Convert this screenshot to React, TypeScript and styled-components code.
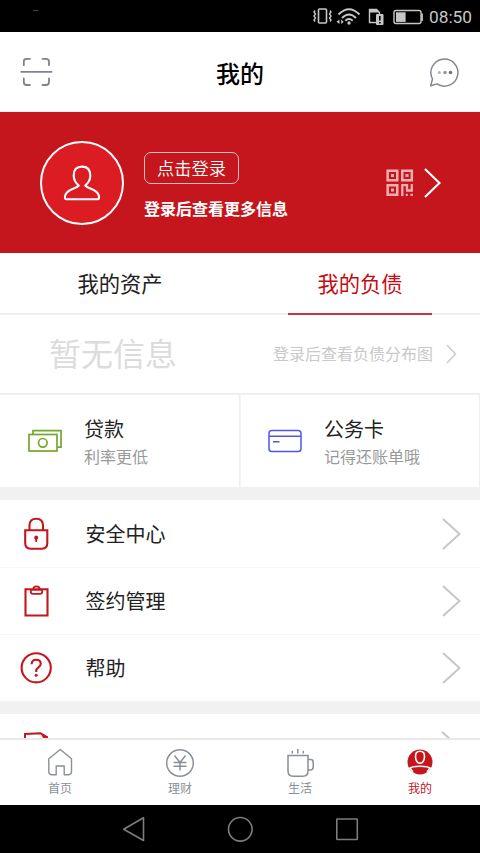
import React from "react";
import styled, { createGlobalStyle } from "styled-components";

const GlobalStyle = createGlobalStyle`
  * { box-sizing: border-box; }
  body {
    margin: 0;
    background: #000;
    font-family: "Noto Sans CJK SC", "Noto Sans", sans-serif;
    color: #222;
  }
  svg { display: block; flex: none; fill: none; }
`;

const Screen = styled.div`
  width: 480px;
  height: 853px;
  display: flex;
  flex-direction: column;
  background: #fff;
  overflow: hidden;
`;

const StatusBar = styled.header`
  height: 32px;
  flex: none;
  display: flex;
  justify-content: space-between;
  background: #000;
`;

const StatusRight = styled.div`
  display: flex;
  padding-right: 8px;
`;

const Clock = styled.span`
  width: 43px;
  font: 17.3px/34px Roboto, sans-serif;
  color: #c6c6c6;
  white-space: nowrap;
`;

const TitleBar = styled.div`
  height: 80px;
  flex: none;
  display: flex;
  align-items: center;
  justify-content: space-between;
  padding: 0 20px;
  border-bottom: 1px solid #edf4f5;
`;

const Title = styled.h1`
  margin: 2px 2px 0 0;
  font-size: 24px;
  line-height: 36px;
  font-weight: 500;
  color: #000;
`;

const Banner = styled.section`
  height: 141px;
  flex: none;
  display: flex;
  align-items: center;
  padding: 0 39px 0 40px;
  background: #c4161c;
`;

const Avatar = styled.div`
  width: 84px;
  height: 84px;
  border: 2px solid #fff;
  border-radius: 50%;
  background: #dc1c23;
  display: flex;
  align-items: center;
  justify-content: center;
`;

const LoginInfo = styled.div`
  margin: 6px auto 0 20px;
  display: flex;
  flex-direction: column;
  align-items: flex-start;
  gap: 12px;
`;

const LoginButton = styled.button`
  width: 95px;
  height: 32px;
  padding: 0;
  border: 1px solid #eebcbe;
  border-radius: 7px;
  background: transparent;
  color: #fff;
  font: 17.3px/30px "Noto Sans CJK SC", sans-serif;
  font-weight: 350;
`;

const LoginHint = styled.span`
  font-size: 16px;
  line-height: 24px;
  font-weight: 700;
  color: #fff;
`;

const BannerActions = styled.div`
  display: flex;
  align-items: center;
  gap: 10px;
  margin-top: 1px;
`;

const Tabs = styled.nav`
  height: 62px;
  flex: none;
  display: flex;
  border-bottom: 2px solid #efefef;
`;

const Tab = styled.div<{ $active?: boolean }>`
  flex: 1;
  display: flex;
  justify-content: center;
  height: 62px;
  span {
    width: 144px;
    height: 62px;
    text-align: center;
    font-size: 21.3px;
    line-height: 60px;
    color: ${(p) => (p.$active ? "#c40d15" : "#222")};
    border-bottom: ${(p) => (p.$active ? "2px solid #cf3138" : "0")};
  }
`;

const Summary = styled.div`
  height: 78px;
  flex: none;
  display: flex;
  align-items: center;
  padding: 0 23px 0 49px;
`;

const EmptyText = styled.span`
  font-size: 32px;
  line-height: 48px;
  color: #dcdcdc;
  margin: -5px auto 0 0;
`;

const SummaryLink = styled.span`
  font-size: 16px;
  line-height: 24px;
  color: #c9c9c9;
  margin: -2px 13px 0 0;
`;

const Cards = styled.section`
  height: 94px;
  flex: none;
  display: flex;
  border-top: 2px solid #efefef;
`;

const Card = styled.div`
  flex: 1;
  display: flex;
  align-items: center;
  padding-left: 28px;
  border-right: 1px solid #efefef;
  & + & { border-left: 1px solid #f4f4f4; padding-left: 27px; }
`;

const CardText = styled.div`
  margin: 0 0 0 22px;
  display: flex;
  flex-direction: column;
`;

const CardTitle = styled.span`
  font-size: 20px;
  line-height: 30px;
`;

const CardSubtitle = styled.span`
  font-size: 16px;
  line-height: 24px;
  color: #999;
`;

const Gap = styled.div`
  height: 13px;
  flex: none;
  background: #f1f1f1;
`;

const List = styled.main`
  flex: none;
`;

const Row = styled.div`
  height: 67px;
  display: flex;
  align-items: center;
  padding: 0 19px 0 20px;
  & + & { border-top: 1px solid #f7f7f7; }
`;

const RowLabel = styled.span`
  margin: 0 auto 0 33.5px;
  font-size: 20px;
  line-height: 30px;
`;

const ClippedRow = styled.div`
  height: 24px;
  flex: none;
  display: flex;
  align-items: flex-end;
  justify-content: space-between;
  padding: 0 29px 0 23px;
`;

const TabBar = styled.nav`
  height: 67px;
  flex: none;
  display: flex;
  border-top: 2px solid #e9e9e9;
`;

const TabItem = styled.div<{ $active?: boolean }>`
  flex: 1;
  display: flex;
  flex-direction: column;
  align-items: center;
  padding-top: 8px;
  font-size: 12px;
  line-height: 19px;
  color: ${(p) => (p.$active ? "#c4161c" : "#8b9098")};
`;

const SystemNav = styled.footer`
  flex: 1;
  display: flex;
  justify-content: center;
  background: #000;
`;

const Chevron = ({ w, h, color, stroke }: { w: number; h: number; color: string; stroke: number }) => (
  <svg width={w} height={h} viewBox={`0 0 ${w} ${h}`} stroke={color} strokeWidth={stroke}>
    <path d={`M1 1 L${w - 1.5} ${h / 2} L1 ${h - 1}`} />
  </svg>
);

const StatusIcons = () => (
  <svg width="117" height="32" viewBox="312 0 117 32" stroke="#c6c6c6">
    <rect x="318.5" y="9" width="8" height="14" rx="1" strokeWidth="1.6" />
    <path d="M315 10.5l-1 1.5 1.5 2-1.5 2 1.5 2-1.5 2 1 1.5M330 10.5l1 1.5-1.5 2 1.5 2-1.5 2 1.5 2-1 1.5" strokeWidth="1.4" />
    <path d="M338.5 14.5q10.500-10.500 21 0M342 18q7-7 14 0M345.300 20.800q3.700-3.400 7.400 0" strokeWidth="1.9" />
    <circle cx="349" cy="23" r="1.7" fill="#c6c6c6" stroke="none" />
    <path d="M339.500 19.500v4.500l-3-2.250zM341.200 19.500v4.500l2.500-2.250z" fill="#c6c6c6" stroke="none" />
    <path d="M376 22.500h-6.500v-13h7l3 3v2" strokeWidth="1.4" />
    <path d="M370 9h6.500l3 3.500h-9.500z" fill="#c6c6c6" stroke="none" />
    <rect x="376" y="14" width="7.500" height="11" rx="1" fill="#c6c6c6" stroke="none" />
    <path d="M379.800 16v4.500M379.800 22v1.500" stroke="#000" strokeWidth="1.6" />
    <rect x="394" y="10.500" width="27" height="13" rx="2" strokeWidth="1.4" />
    <path d="M422 13.500v7.500" strokeWidth="1.800" />
    <rect x="396" y="12.300" width="9.600" height="9.600" fill="#c6c6c6" stroke="none" />
  </svg>
);

const ScanIcon = () => (
  <svg width="33" height="30" viewBox="0 0 33 30" stroke="#80838d" strokeWidth="1.8" strokeLinecap="round">
    <path d="M3.800 8.200V4.600Q3.800 1.800 6.600 1.800H10M22.500 1.800H26Q29 1.800 29 4.600V8.200M3.800 21.500V25Q3.800 28 6.600 28H10M22.500 28H26Q29 28 29 25V21.500M1.200 14.800H31.500" />
  </svg>
);

const ChatIcon = () => (
  <svg width="31" height="30" viewBox="429 57 31 30" stroke="#858790" strokeWidth="1.500" strokeLinejoin="round">
    <path d="M430.700 85.700L432.500 79A13.500 13.500 0 1 1 437 83.900Z" />
    <g stroke="none"><circle cx="439.300" cy="72.500" r="1.600" fill="#b6b8be" /><circle cx="445" cy="72.500" r="1.700" fill="#92959d" /><circle cx="450.500" cy="72.500" r="1.800" fill="#6f727c" /></g>
  </svg>
);

const PersonIcon = () => (
  <svg width="38" height="38" viewBox="0 0 38 38" stroke="#fff" strokeWidth="2.100" strokeLinejoin="round">
    <path d="M15.800 21.500C12.300 18.700 10.700 15.500 10.700 11.500C10.700 5.500 13.500 2.600 19 2.600S27.300 5.500 27.300 11.500C27.300 15.500 25.700 18.700 22.200 21.500C25.500 25.500 34 24.500 35.800 31.500Q36.700 35.300 34.500 35.300H3.500Q1.300 35.300 2.200 31.500C4 24.500 12.500 25.500 15.800 21.500Z" />
  </svg>
);

const QrIcon = () => (
  <svg width="28" height="28" viewBox="0 0 28 28" stroke="#f1aeb1" strokeWidth="2.500">
    <path d="M1.650 1.650h9.600v9.600h-9.600zM16.250 1.650h9.600v9.600h-9.600zM1.650 16.250h9.600v9.600h-9.600z" />
    <path d="M5 6.500h3M19.500 6.500h3M5 21h3" strokeWidth="3" />
    <path d="M16.300 27V16.200H21V21.500M25.800 15V21.500H20M19.800 25.800h2M24.500 25.800h2.500" strokeWidth="2.300" />
  </svg>
);

const CashIcon = () => (
  <svg width="34" height="24" viewBox="0 0 34 24" stroke="#74a72c" strokeWidth="1.700">
    <rect x="1" y="5.500" width="28" height="16.500" />
    <path d="M5 5.500V1.700H33V18.200H29" />
    <circle cx="14.800" cy="13.800" r="4.300" />
  </svg>
);

const CreditCardIcon = () => (
  <svg width="34" height="24" viewBox="0 0 34 24" stroke="#5254ee" strokeWidth="1.500">
    <rect x="1" y="1.500" width="32" height="21" rx="2.800" />
    <path d="M1 7.200h32M5 12.700h6.500" />
  </svg>
);

const LockIcon = () => (
  <svg width="32" height="34" viewBox="0 0 32 34" stroke="#c4161c" strokeWidth="2.100">
    <path d="M5.200 13.200H27.300V26Q27.300 31.700 22 31.700H10.500Q5.200 31.700 5.200 26zM9.500 13.200V8.500Q9.500 1.800 16.200 1.800T23 8.500V13.200" />
    <path d="M16.200 18.500a2.200 2.200 0 0 1 1.100 4l-.4 2.600h-1.400l-.4-2.600a2.200 2.200 0 0 1 1.100-4z" fill="#c4161c" stroke="none" />
  </svg>
);

const ClipboardIcon = () => (
  <svg width="32" height="34" viewBox="0 0 32 34" stroke="#c4161c" strokeWidth="2.100">
    <path d="M5.500 5.300H27.500V31.500H5.500Z" />
    <path d="M10.800 5.800V7.500Q10.800 9.900 13.200 9.900H19.800Q22.200 9.900 22.200 7.500V5.800Z" fill="#fff" strokeWidth="1.800" />
    <path d="M13.300 5.500Q13.300 2.300 16.500 2.300T19.700 5.500" strokeWidth="1.800" />
  </svg>
);

const HelpIcon = () => (
  <svg width="32" height="34" viewBox="0 0 32 34" stroke="#c4161c" strokeWidth="2.100">
    <circle cx="16.200" cy="16.800" r="14.600" />
    <path d="M11.600 13.200Q11.800 8.700 16.200 8.700T20.800 12.600Q20.800 14.700 18.500 16.300T16.200 19.800V21" />
    <circle cx="16.200" cy="24.300" r="1.500" fill="#c4161c" stroke="none" />
  </svg>
);

const HomeIcon = () => (
  <svg width="28" height="30" viewBox="0 0 28 30" stroke="#8b9098" strokeWidth="1.400" strokeLinejoin="round">
    <path d="M14.300 1.500L25.500 10.800V23.500Q25.500 26.700 22.200 26.700H18.200V18H10.200V26.700H6Q2.800 26.700 2.800 23.500V10.800Z" />
  </svg>
);

const YuanIcon = () => (
  <svg width="30" height="30" viewBox="0 0 30 30" stroke="#8b9098" strokeWidth="1.500">
    <circle cx="15" cy="15" r="13.300" />
    <path d="M9.500 7.500L15 14.500L20.500 7.500M15 14.500V22.500M8.500 14.500H21.500M8.500 18.200H21.500" />
  </svg>
);

const CupIcon = () => (
  <svg width="30" height="30" viewBox="0 0 30 30" stroke="#8b9098" strokeWidth="1.500">
    <path d="M3 7.500H23V23Q23 28.200 18 28.200H8Q3 28.200 3 23ZM23 11.500H25.500Q28.200 11.500 28.200 14V19Q28.200 22 25.500 22H23M7.300 2.700v2.800M12.800 1v4.500M18.300 2.700v2.800" />
  </svg>
);

const ProfileIcon = () => (
  <svg width="30" height="30" viewBox="0 0 30 30" stroke="#fff" strokeWidth="1.600">
    <circle cx="15" cy="14" r="12.500" fill="#c4161c" stroke="none" />
    <path d="M15 3.200C18.500 3.200 19.700 5.500 19.500 9Q19 15.200 15 15.200T10.500 9C10.300 5.500 11.500 3.200 15 3.200Z" />
    <path d="M3.500 20.800Q7 18.300 15 18.300T26.500 20.800" />
    <path d="M5 19.800L7.800 24M25 19.800L22.200 24" />
  </svg>
);

const NavButtons = () => (
  <svg width="240" height="48" viewBox="120 805 240 48" stroke="#7c7c7c" strokeWidth="1.600" strokeLinejoin="round">
    <path d="M143.500 817.700V840.500L123.700 829.200Z" />
    <circle cx="240.300" cy="829.300" r="11.800" />
    <rect x="336.800" y="819" width="20.500" height="20.500" rx="0.500" />
  </svg>
);

const menu = [
  { label: "安全中心", Icon: LockIcon },
  { label: "签约管理", Icon: ClipboardIcon },
  { label: "帮助", Icon: HelpIcon },
];

const bottomTabs = [
  { label: "首页", Icon: HomeIcon },
  { label: "理财", Icon: YuanIcon },
  { label: "生活", Icon: CupIcon },
  { label: "我的", Icon: ProfileIcon, active: true },
];

export default function App() {
  return (
    <>
      <GlobalStyle />
      <Screen>
        <StatusBar>
          <svg width="60" height="32" stroke="#444"><path d="M33 10.500h5" /></svg>
          <StatusRight>
            <StatusIcons />
            <Clock>08:50</Clock>
          </StatusRight>
        </StatusBar>
        <TitleBar>
          <ScanIcon />
          <Title>我的</Title>
          <ChatIcon />
        </TitleBar>
        <Banner>
          <Avatar><PersonIcon /></Avatar>
          <LoginInfo>
            <LoginButton>点击登录</LoginButton>
            <LoginHint>登录后查看更多信息</LoginHint>
          </LoginInfo>
          <BannerActions>
            <QrIcon />
            <Chevron w={17} h={30} color="#fff" stroke={2.2} />
          </BannerActions>
        </Banner>
        <Tabs>
          <Tab><span>我的资产</span></Tab>
          <Tab $active><span>我的负债</span></Tab>
        </Tabs>
        <Summary>
          <EmptyText>暂无信息</EmptyText>
          <SummaryLink>登录后查看负债分布图</SummaryLink>
          <Chevron w={11} h={20} color="#c9c9c9" stroke={1.4} />
        </Summary>
        <Cards>
          <Card>
            <CashIcon />
            <CardText><CardTitle>贷款</CardTitle><CardSubtitle>利率更低</CardSubtitle></CardText>
          </Card>
          <Card>
            <CreditCardIcon />
            <CardText><CardTitle>公务卡</CardTitle><CardSubtitle>记得还账单哦</CardSubtitle></CardText>
          </Card>
        </Cards>
        <Gap />
        <List>
          {menu.map(({ label, Icon }) => (
            <Row key={label}>
              <Icon />
              <RowLabel>{label}</RowLabel>
              <Chevron w={19} h={32} color="#c7c7c7" stroke={2} />
            </Row>
          ))}
        </List>
        <Gap />
        <ClippedRow>
          <svg width="26" height="6" viewBox="0 0 26 6" stroke="#c4161c" strokeWidth="2">
            <path d="M2 6V2L17.500 1.200L24.500 5.500" />
            <path d="M17.500 1L25 4.500V6H20Z" fill="#c4161c" stroke="none" />
          </svg>
          <svg width="10" height="7" viewBox="0 0 10 7" stroke="#c7c7c7" strokeWidth="2"><path d="M1 1L9 8" /></svg>
        </ClippedRow>
        <TabBar>
          {bottomTabs.map(({ label, Icon, active }) => (
            <TabItem key={label} $active={active}><Icon />{label}</TabItem>
          ))}
        </TabBar>
        <SystemNav><NavButtons /></SystemNav>
      </Screen>
    </>
  );
}
